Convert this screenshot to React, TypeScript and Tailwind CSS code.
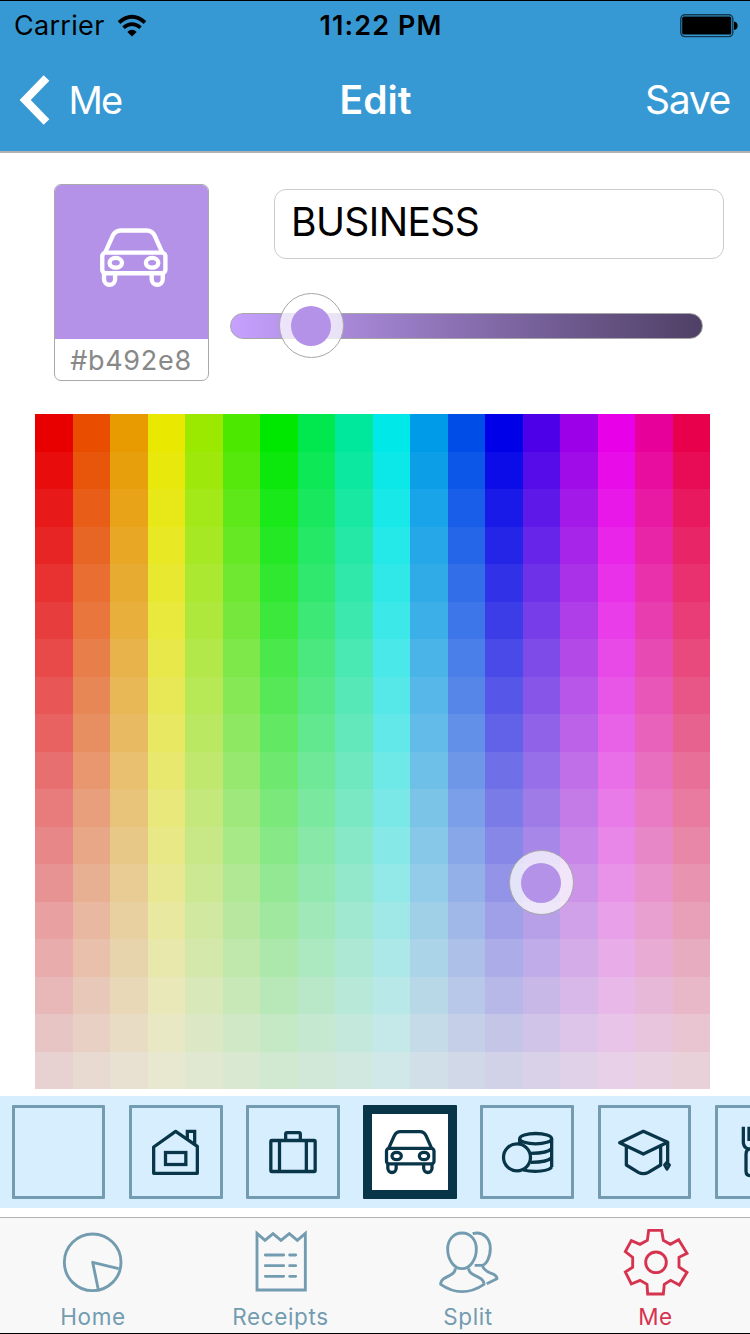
import type { ReactNode } from "react";

const HUES = 18;
const ROWS = 18;
const VALUE = 232;

function cellColor(row: number, col: number): string {
  const s = 1 - (row * 0.9) / (ROWS - 1);
  const h = (col * 6) / HUES;
  const channel = (n: number) => {
    const k = (n + h) % 6;
    return Math.round(VALUE * (1 - s * Math.max(0, Math.min(k, 4 - k, 1))));
  };
  return `rgb(${channel(5)}, ${channel(3)}, ${channel(1)})`;
}

function TileIcon({ children, className }: { children?: ReactNode; className: string }) {
  return (
    <svg viewBox="0 0 282 282" className={className} fill="none" stroke="currentColor" strokeWidth={9.8} strokeLinejoin="round">
      {children}
    </svg>
  );
}

const car = (
  <>
    <path d="M77 130 L94 92 Q100 80 112 80 H171 Q183 80 189 92 L206 130" />
    <rect x={70.5} y={130} width={142.5} height={46.5} rx={8} />
    <ellipse cx={101} cy={153} rx={14} ry={11} />
    <ellipse cx={183} cy={153} rx={14} ry={11} />
    <path d="M74.500 177 v13 a12.500 12.500 0 0 0 25 0 v-13 M182 177 v13 a12.500 12.500 0 0 0 25 0 v-13" />
  </>
);

const house = (
  <>
    <path d="M74 126 L140 79 L205 124 V205 H74 Z" />
    <path d="M175 103 V79 H197 V118" strokeLinejoin="miter" />
    <rect x={109.5} y={142.5} width={61} height={36} strokeLinejoin="miter" />
  </>
);

const suitcase = (
  <>
    <rect x={74.5} y={106.5} width={133} height={93} rx={3} />
    <path d="M100.500 106 V199 M181 106 V199 M119 106 V87 q0 -4 4 -4 H159 q4 0 4 4 V106" />
  </>
);

const coins = (
  <>
    <circle cx={111} cy={157} r={40.5} />
    <ellipse cx={167} cy={101} rx={48} ry={15.5} />
    <path d="M119 101 V115 M215 101 V186 M153 145 Q203 145 215 131 M153 172 Q203 172 215 158 M130 195 C165 203 208 198 215 186" />
  </>
);

const graduation = (
  <>
    <path d="M65 113 L136 79 L209 112 L136 147 Z" />
    <path d="M85 124 V180 L121 202 Q136 210 151 202 L188 180 V124 M209 112 V171" />
    <path d="M207 172 l7 8 l-7 12 l-7 -12 Z" />
  </>
);

const cutlery = (
  <>
    <path d="M85 65 V113 Q87 128 100 132 H114 Q128 128 130 113 V65 M102 65 V108 M116 65 V108" />
    <path d="M100 132 Q93 138 93 148 V198 Q93 212 106 212 Q119 212 119 198 V132" />
  </>
);

const categories = [
  { name: "none", icon: null, selected: false },
  { name: "house", icon: house, selected: false },
  { name: "suitcase", icon: suitcase, selected: false },
  { name: "car", icon: car, selected: true },
  { name: "coins", icon: coins, selected: false },
  { name: "graduation", icon: graduation, selected: false },
  { name: "cutlery", icon: cutlery, selected: false },
];

const tabs = [
  {
    label: "Home",
    active: false,
    icon: (
      <>
        <circle cx={101} cy={106} r={85} />
        <path d="M179 125 L101 106 L118 188" />
      </>
    ),
  },
  {
    label: "Receipts",
    active: false,
    icon: (
      <>
        <path d="M33 19 L57 40 L81 20 L105 40 L130 20 L154 40 L178 19 V189 H33 Z" strokeLinejoin="miter" />
        <path d="M58 84 H113 M131 84 H149 M58 116 H113 M131 116 H149 M58 148 H113 M131 148 H149" strokeLinecap="round" />
      </>
    ),
  },
  {
    label: "Split",
    active: false,
    icon: (
      <>
        <path d="M84 18 C110 18 127 39 127 66 C127 98 108 125 84 125 C60 125 41 98 41 66 C41 39 58 18 84 18 Z" />
        <path d="M64 124 C64 134 58 140 48 145 C33 152 20 158 20 172 C42 187 64 194 84 194 C104 194 128 187 150 172 C150 158 137 152 122 145 C110 140 104 134 104 124" />
        <path d="M116 20 C148 11 169 36 169 64 C169 92 156 115 142 115 H122 M145 115 C149 131 163 136 174 140 C186 145 189 150 189 155 L158 170" />
      </>
    ),
  },
  {
    label: "Me",
    active: true,
    icon: (
      <>
        <path
          d="M83 10 L122 10 L127 40 L148 52 L173 38 L198 79 L174 91 L174 120 L198 136 L175 174 L149 160 L130 172 L127 201 L80 201 L78 172 L57 160 L31 171 L13 135 L35 121 L35 91 L13 74 L31 41 L57 52 L79 40 Z"
          strokeLinejoin="miter"
        />
        <circle cx={105} cy={106} r={31} />
      </>
    ),
  },
];

function StatusBar() {
  return (
    <div className="grid h-[49px] grid-cols-[1fr_auto_1fr] items-center text-[27px] leading-[49px] text-black">
      <div className="flex items-center pl-[14px]">
        <span className="tracking-[0.3px]">Carrier</span>
        <svg viewBox="0 0 30 24" className="ml-[12px] h-[24px] w-[30px]" fill="none" stroke="#000">
          <path d="M2 8.500 Q15 -3 28 8.500" strokeWidth={3.8} />
          <path d="M6.500 13.700 Q15 6.500 23.500 13.700" strokeWidth={3.6} />
          <path d="M10.300 18 Q15 13.500 19.700 18 L15 22.500 Z" fill="#000" stroke="none" />
        </svg>
      </div>
      <span className="pl-[12px] font-semibold tracking-[1.1px]">11:22 PM</span>
      <svg viewBox="0 0 58 24" className="mr-[12.5px] h-[24px] w-[58px] justify-self-end">
        <rect x={0.8} y={0.8} width={52} height={21.8} rx={4} fill="none" stroke="#12384f" strokeWidth={1.4} />
        <rect x={2.2} y={2.6} width={49} height={18} rx={1.6} />
        <path d="M54 7.500 Q57.600 8 57.600 11.700 Q57.600 15.400 54 15.900 Z" />
      </svg>
    </div>
  );
}

function NavBar() {
  return (
    <div className="grid h-[99px] grid-cols-[1fr_auto_1fr] items-center text-[39px] leading-[99px] text-white">
      <div className="flex items-center pl-[19px]">
        <svg viewBox="0 0 31 50" className="h-[50px] w-[31px]" fill="none" stroke="#fff" strokeWidth={8}>
          <path d="M27.500 3 L6.200 25 L27.500 47" />
        </svg>
        <span className="pt-[1px] pl-[18.5px] text-[38px] leading-[98px] tracking-[-1.8px]">Me</span>
      </div>
      <span className="pl-[1px] font-semibold">Edit</span>
      <span className="justify-self-end pr-[20px] tracking-[-1.3px]">Save</span>
    </div>
  );
}

function Handle({ className }: { className: string }) {
  return (
    <div className={`absolute flex size-[65px] items-center justify-center rounded-full border border-[#a6a6a6] bg-white/75 pr-[1px] ${className}`}>
      <div className="size-[40px] rounded-full bg-[#b492e8]" />
    </div>
  );
}

export default function App() {
  return (
    <div className="flex h-[1334px] w-[750px] flex-col overflow-hidden border-y border-black bg-white font-['Inter','Liberation_Sans',sans-serif]">
      <header className="h-[152px] shrink-0 border-b-2 border-[#b2b2b2] bg-[#3799d3]">
        <StatusBar />
        <NavBar />
      </header>

      <section className="flex h-[261px] shrink-0 items-start pt-[31px] pl-[54px]">
        <div className="flex h-[197px] w-[155px] flex-col overflow-hidden rounded-[7px] border border-[#a9a9a9]">
          <div className="h-[154px] shrink-0 bg-[#b492e8] pt-[9.5px] pl-[16px] text-white">
            <TileIcon className="size-[125px]">{car}</TileIcon>
          </div>
          <div className="pr-[1px] text-center text-[27px] leading-[44px] tracking-[0.7px] text-[#888888]">#b492e8</div>
        </div>
        <div className="flex flex-col pt-[5px] pl-[21px]">
          <div className="ml-[44px] h-[70px] w-[450px] rounded-[12px] border border-[#cccccc] pl-[16px] text-[39px] leading-[64px] tracking-[-0.6px] text-black">
            BUSINESS
          </div>
          <div className="relative mt-[54px] h-[26px] w-[473px] rounded-full border border-[#a6a6a6] bg-linear-to-r from-[#c6a1ff] to-[#4f4066]">
            <Handle className="-top-[21px] left-[48px]" />
          </div>
        </div>
      </section>

      <section className="relative ml-[35px] grid size-[675px] shrink-0 grid-cols-[repeat(18,37.5px)] grid-rows-[repeat(18,37.5px)]">
        {Array.from({ length: ROWS * HUES }, (_, i) => (
          <div key={i} style={{ backgroundColor: cellColor(Math.floor(i / HUES), i % HUES) }} />
        ))}
        <Handle className="top-[436px] left-[474px]" />
      </section>

      <section className="mt-[7px] flex h-[112px] shrink-0 items-center gap-[23.55px] overflow-hidden bg-[#d7eeff] pl-[11.8px]">
        {categories.map((c) => (
          <div
            key={c.name}
            className={
              c.selected
                ? "relative h-[94px] w-[93.6px] shrink-0 rounded-[1px] border-9 border-[#083548] bg-white text-[#083548]"
                : "relative h-[94px] w-[93.6px] shrink-0 rounded-[1px] border-3 border-[#739cb0] text-[#083548]"
            }
          >
            <TileIcon className={c.selected ? "absolute -top-[9px] -left-[9px] size-[94px]" : "absolute -top-[3px] -left-[3px] size-[94px]"}>
              {c.icon}
            </TileIcon>
          </div>
        ))}
      </section>

      <nav className="mt-[9px] grid h-[116px] shrink-0 grid-cols-4 border-t border-[#b2b2b2] bg-[#f8f8f8] pt-[9px]">
        {tabs.map((t) => (
          <div key={t.label} className={t.active ? "flex flex-col items-center text-[#d6334f]" : "flex flex-col items-center text-[#739cb0]"}>
            <svg viewBox="0 0 210 210" className="size-[70px] shrink-0" fill="none" stroke="currentColor" strokeWidth={8.6} strokeLinejoin="round">
              {t.icon}
            </svg>
            <span className="pr-[1.5px] text-[22.5px] leading-[39px] tracking-[0.6px]">{t.label}</span>
          </div>
        ))}
      </nav>
    </div>
  );
}
